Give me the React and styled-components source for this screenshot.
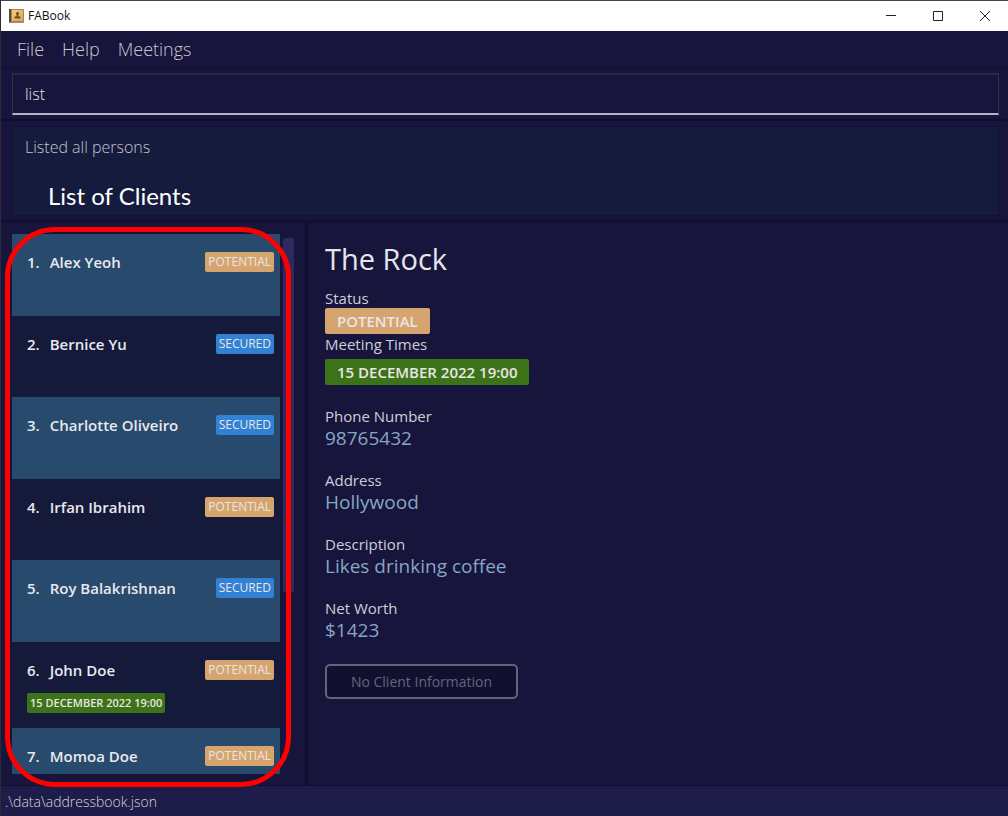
import React from "react";
import styled, { createGlobalStyle } from "styled-components";

const Global = createGlobalStyle`
  * { box-sizing: border-box; }
  body { margin: 0; background: #17153b; font-family: "Open Sans", "Noto Sans", sans-serif; }
  h1, h2, p, dl, dd, ol { margin: 0; padding: 0; font-weight: 400; }
`;

const Window = styled.div`
  height: 100vh;
  display: flex;
  flex-direction: column;
  overflow: hidden;
  color: #c9c8d2;
  background: #17153b;
  border-left: 1px solid #2b2b38;
`;

const TitleBar = styled.header`
  flex: none;
  height: 31px;
  display: flex;
  align-items: center;
  padding-left: 8px;
  background: #fff;
  border-top: 1px solid #45454d;
`;

const AppTitle = styled.h1`
  flex: 1;
  padding-left: 4px;
  font-size: 12px;
  line-height: 16px;
  color: #111;
`;

const WindowButton = styled.button`
  width: 47px;
  height: 30px;
  padding: 0;
  border: 0;
  background: none;
  display: grid;
  place-items: center;
`;

const MenuBar = styled.nav`
  flex: none;
  height: 37px;
  display: flex;
  align-items: center;
  gap: 18px;
  padding-left: 16px;
  border-bottom: 1px solid #100f30;
`;

const MenuButton = styled.button`
  padding: 0;
  border: 0;
  background: none;
  font: 300 18px/24px "Open Sans", sans-serif;
  color: #c9c8d2;
`;

const CommandPane = styled.form`
  flex: none;
  height: 53px;
  padding: 5px 9px 6px 11px;
  border-bottom: 2px solid #110f31;
`;

const CommandInput = styled.input`
  display: block;
  width: 100%;
  height: 42px;
  padding: 0 12px;
  border: 1px solid #33333d;
  border-top: 2px solid #29283b;
  border-bottom: 2px solid #b5b3c4;
  outline: 0;
  background: #17153b;
  font: 300 16px/24px "Open Sans", sans-serif;
  color: #e4e3ea;
`;

const ResultPane = styled.section`
  flex: none;
  height: 102px;
  padding: 5px 9px 4px 11px;
  border-bottom: 3px solid #110f31;
`;

const Result = styled.div`
  height: 90px;
  padding: 8px 12px;
  border: 1px solid #111231;
  background: #151b3c;
`;

const ResultText = styled.p`
  font-size: 16px;
  line-height: 24px;
  font-weight: 300;
  color: #c3c4cf;
`;

const Caption = styled.h2`
  margin: 23px 0 0 23px;
  font-family: Lato, sans-serif;
  font-size: 24px;
  line-height: 28px;
  color: #fff;
`;

const Main = styled.main`
  flex: 1;
  min-height: 0;
  display: flex;
`;

const ListPane = styled.section`
  position: relative;
  flex: none;
  width: 307px;
  display: flex;
  gap: 3px;
  padding: 11px;
  border-right: 3px solid #110f31;
`;

const ClientList = styled.ol`
  flex: none;
  width: 268px;
  overflow: hidden;
  list-style: none;
`;

const ClientRow = styled.li`
  min-height: ${(p) => (p.$striped ? 82 : 81)}px;
  padding: 18px 6px 15px 15px;
  background: ${(p) => (p.$striped ? "#284a6c" : "#151a3a")};
`;

const ClientHead = styled.div`
  display: flex;
  align-items: center;
  justify-content: space-between;
  height: 20px;
`;

const ClientName = styled.div`
  display: flex;
  gap: 10px;
  font-size: 15px;
  line-height: 20px;
  font-weight: 600;
  color: #e8e9ee;
`;

const tones = { POTENTIAL: "#d6a56f", SECURED: "#3181d4", meeting: "#3c7318" };

const Tag = styled.span`
  display: block;
  width: fit-content;
  padding: ${(p) => (p.$large ? "0 12px" : "0 3px")};
  border-radius: 2px;
  background: ${(p) => tones[p.$tone]};
  color: #e9e6e6;
  font-size: ${(p) => (p.$large ? 15 : 12)}px;
  line-height: ${(p) => (p.$large ? 26 : 20)}px;
  font-weight: ${(p) => (p.$large ? 600 : 400)};
`;

const RowMeeting = styled(Tag)`
  margin-top: 13px;
  font-size: 11px;
  font-weight: 600;
`;

const ScrollThumb = styled.div`
  width: 11px;
  height: 354px;
  margin-top: 4px;
  border-radius: 2px;
  background: #2e2a5d;
`;

const Highlight = styled.div`
  position: absolute;
  inset: 4px auto -2px 4px;
  width: 286px;
  border: 5px solid #ff0000;
  border-radius: 50px;
  pointer-events: none;
`;

const DetailPane = styled.section`
  flex: 1;
  padding: 16px 17px;
`;

const PersonName = styled.h2`
  font-size: 29px;
  line-height: 40px;
  margin-bottom: 9px;
  color: #e6e5eb;
`;

const Label = styled.dt`
  font-size: 15px;
  line-height: 20px;
  color: #cfced8;
`;

const Value = styled.dd`
  font-size: 19px;
  line-height: 25px;
  margin-bottom: 19px;
  color: #86a6c4;
`;

const MeetingValue = styled.dd`
  padding: 5px 0 21px;
`;

const InfoButton = styled.button`
  width: 193px;
  height: 35px;
  margin-top: 2px;
  padding: 0;
  border: 2px solid #66647a;
  border-radius: 5px;
  background: #121030;
  color: #66647a;
  font: 400 14px/20px "Open Sans", sans-serif;
`;

const StatusBar = styled.footer`
  flex: none;
  height: 31px;
  padding-left: 4px;
  border-top: 1px solid #110f31;
  background: #1e1c49;
  font-size: 14px;
  line-height: 32px;
  font-weight: 300;
  color: #d4d3dc;
`;

const clients = [
  { name: "Alex Yeoh", status: "POTENTIAL" },
  { name: "Bernice Yu", status: "SECURED" },
  { name: "Charlotte Oliveiro", status: "SECURED" },
  { name: "Irfan Ibrahim", status: "POTENTIAL" },
  { name: "Roy Balakrishnan", status: "SECURED" },
  { name: "John Doe", status: "POTENTIAL", meeting: "15 DECEMBER 2022 19:00" },
  { name: "Momoa Doe", status: "POTENTIAL" },
];

const fields = [
  ["Phone Number", "98765432"],
  ["Address", "Hollywood"],
  ["Description", "Likes drinking coffee"],
  ["Net Worth", "$1423"],
];

function BookIcon() {
  return (
    <svg width="15" height="14" viewBox="0 0 15 14" aria-hidden="true">
      <defs>
        <linearGradient id="cover" x1="0" y1="0" x2="1" y2="1">
          <stop offset="0" stopColor="#f2cb7c" />
          <stop offset="1" stopColor="#dca650" />
        </linearGradient>
      </defs>
      <rect width="15" height="14" rx="1" fill="#a98250" />
      <rect x="3" y="1" width="11" height="11" fill="url(#cover)" />
      <rect width="2" height="13" fill="#57493f" />
      <rect x="1" y="13" width="14" height="1" fill="#a0917c" />
      <path d="M8.500 3a1.600 1.600 0 0 1 1.100 2.700c-.4.500-.4 1.300.2 1.600l1.700.4V9.500h-6V7.700l1.700-.4c.6-.3.6-1.100.2-1.600A1.600 1.600 0 0 1 8.500 3z" fill="#6b5230" />
    </svg>
  );
}

function Glyph({ d }) {
  return (
    <svg width="12" height="12" viewBox="0 0 12 12" fill="none" stroke="#222" aria-hidden="true">
      <path d={d} />
    </svg>
  );
}

export default function App() {
  return (
    <Window>
      <Global />
      <TitleBar>
        <BookIcon />
        <AppTitle>FABook</AppTitle>
        <WindowButton aria-label="Minimize"><Glyph d="M1 5.500h10" /></WindowButton>
        <WindowButton aria-label="Maximize"><Glyph d="M1.500 1.500h9v9h-9z" /></WindowButton>
        <WindowButton aria-label="Close"><Glyph d="M1 1l10 10M11 1L1 11" /></WindowButton>
      </TitleBar>
      <MenuBar>
        {["File", "Help", "Meetings"].map((m) => <MenuButton key={m}>{m}</MenuButton>)}
      </MenuBar>
      <CommandPane onSubmit={(e) => e.preventDefault()}>
        <CommandInput aria-label="Command" defaultValue="list" />
      </CommandPane>
      <ResultPane>
        <Result>
          <ResultText>Listed all persons</ResultText>
          <Caption>List of Clients</Caption>
        </Result>
      </ResultPane>
      <Main>
        <ListPane>
          <ClientList>
            {clients.map((c, i) => (
              <ClientRow key={c.name} $striped={i % 2 === 0}>
                <ClientHead>
                  <ClientName><span>{i + 1}.</span><span>{c.name}</span></ClientName>
                  <Tag $tone={c.status}>{c.status}</Tag>
                </ClientHead>
                {c.meeting && <RowMeeting $tone="meeting">{c.meeting}</RowMeeting>}
              </ClientRow>
            ))}
          </ClientList>
          <ScrollThumb />
          <Highlight />
        </ListPane>
        <DetailPane>
          <PersonName>The Rock</PersonName>
          <dl>
            <Label>Status</Label>
            <dd><Tag $large $tone="POTENTIAL">POTENTIAL</Tag></dd>
            <Label>Meeting Times</Label>
            <MeetingValue><Tag $large $tone="meeting">15 DECEMBER 2022 19:00</Tag></MeetingValue>
            {fields.map(([label, value]) => (
              <React.Fragment key={label}>
                <Label>{label}</Label>
                <Value>{value}</Value>
              </React.Fragment>
            ))}
          </dl>
          <InfoButton>No Client Information</InfoButton>
        </DetailPane>
      </Main>
      <StatusBar>.\data\addressbook.json</StatusBar>
    </Window>
  );
}
